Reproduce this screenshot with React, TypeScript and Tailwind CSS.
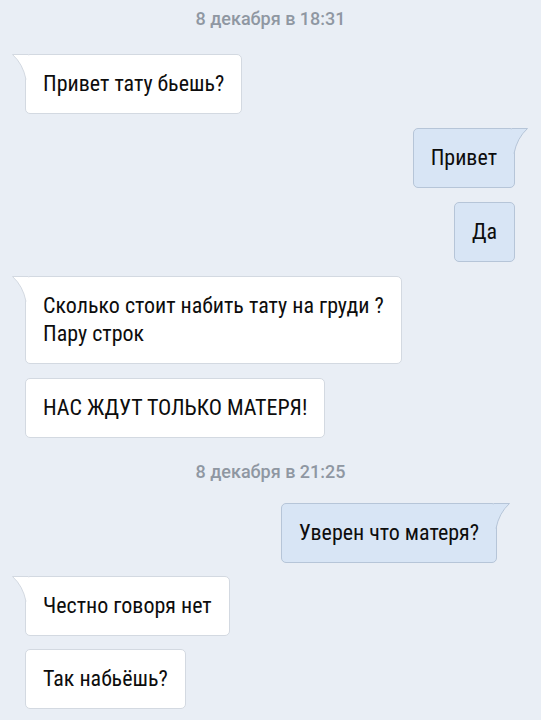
import React from 'react';

type Msg = { text: string[]; out?: boolean; tail?: boolean; inset?: boolean };

const first: Msg[] = [
  { text: ['Привет тату бьешь?'], tail: true },
  { text: ['Привет'], out: true, tail: true },
  { text: ['Да'], out: true },
  { text: ['Сколько стоит набить тату на груди ?', 'Пару строк'], tail: true },
  { text: ['НАС ЖДУТ ТОЛЬКО МАТЕРЯ!'] },
];

const second: Msg[] = [
  { text: ['Уверен что матеря?'], out: true, tail: true, inset: true },
  { text: ['Честно говоря нет'], tail: true },
  { text: ['Так набьёшь?'] },
];

const Tail = ({ out }: { out?: boolean }) =>
  out ? (
    <svg className="absolute -top-px -right-[15px]" width="17" height="26" viewBox="0 0 17 26">
      <path d="M0 0.5 H15.5 Q5 10 2 25.5 L0 25.5 Z" fill="#d8e5f5" />
      <path d="M0 0.5 H15.5 Q5 10 2 25.5" fill="none" stroke="#b6c5d8" strokeWidth="1" />
    </svg>
  ) : (
    <svg className="absolute -top-px -left-[15px]" width="17" height="26" viewBox="0 0 17 26">
      <path d="M17 0.5 H1.5 Q12 10 15 25.5 L17 25.5 Z" fill="#ffffff" />
      <path d="M17 0.5 H1.5 Q12 10 15 25.5" fill="none" stroke="#d3d9e1" strokeWidth="1" />
    </svg>
  );

const Bubble = ({ m }: { m: Msg }) => (
  <div className={m.out ? (m.inset ? 'flex justify-end pr-[44px]' : 'flex justify-end pr-[26px]') : 'flex justify-start pl-[25px]'}>
    <div
      className={
        "relative rounded-[5px] border px-[17px] py-[15px] font-['Roboto_Condensed',Roboto,sans-serif] font-stretch-condensed font-normal text-[22px] leading-[28px] text-[#0d0d0d] " +
        (m.out ? 'bg-[#d8e5f5] border-[#b6c5d8]' : 'bg-white border-[#d3d9e1]')
      }
    >
      {m.tail && <Tail out={m.out} />}
      {m.text.map((t) => (
        <div key={t}>{t}</div>
      ))}
    </div>
  </div>
);

const DateLine = ({ children }: { children: React.ReactNode }) => (
  <div className="text-center font-['Roboto',sans-serif] text-[18px] leading-[20px] font-medium text-[#8f97a2] py-[8px]">
    {children}
  </div>
);

export default function App() {
  return (
    <div className="w-[541px] h-[720px] overflow-hidden bg-[#e9eef5] pt-[1px]">
      <DateLine>8 декабря в 18:31</DateLine>
      <div className="flex flex-col gap-[14px] mt-[17px]">
        {first.map((m, i) => (
          <Bubble key={i} m={m} />
        ))}
      </div>
      <div className="mt-[16px]">
        <DateLine>8 декабря в 21:25</DateLine>
      </div>
      <div className="flex flex-col gap-[13px] mt-[13px]">
        {second.map((m, i) => (
          <Bubble key={i} m={m} />
        ))}
      </div>
    </div>
  );
}
